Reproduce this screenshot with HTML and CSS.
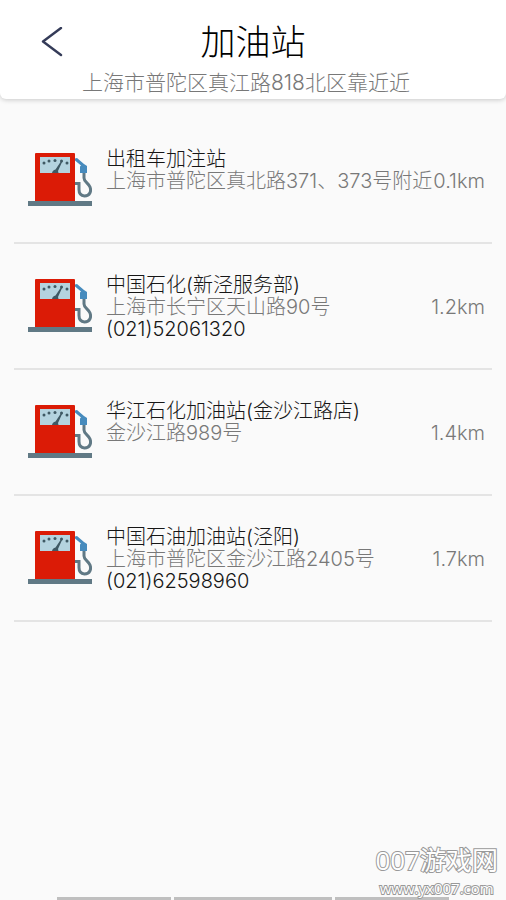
FILE: index.html
```html
<!DOCTYPE html>
<html lang="zh-CN">
<head>
<meta charset="utf-8">
<meta name="viewport" content="width=device-width, initial-scale=1">
<title>加油站</title>
<link rel="stylesheet" href="styles.css">
</head>
<body>
<svg class="defs" aria-hidden="true">
  <symbol id="pump" viewBox="0 0 64 56">
    <path d="M7 2q0-1 1-1h38q1 0 1 1v48H7z" fill="#db1b06"/>
    <path d="M12 5h30v16H12z" fill="#b4d3df"/>
    <g fill="#3f5964">
      <circle cx="16" cy="11" r="1.500"/><circle cx="21" cy="9" r="1.500"/><circle cx="27" cy="8.500" r="1.500"/><circle cx="33.500" cy="9" r="1.500"/><circle cx="39" cy="11" r="1.500"/>
      <path d="M24 21q.5-3 3.500-3.500l6-9 1 .5-4.500 10 .5 2z"/>
    </g>
    <path d="M0 49h64v5H0z" fill="#607985"/>
    <path d="M47 31.500h4v6q0 6 5.500 6.500c5.500 0 7-5 5.500-9-1.500-4-6-5-6-9v-5" fill="none" stroke="#607985" stroke-width="3"/>
    <path d="M47 6.500l2-.5 7 6 3 2v7h-7v-6.500l1-1-6-5z" fill="#478bbd"/>
  </symbol>
</svg>
<header class="header">
  <div class="bar">
    <button class="back" type="button" aria-label="返回">
      <svg class="back-icon" viewBox="0 0 22 30" aria-hidden="true"><path d="M20 1 2 14.500 20 28" fill="none" stroke="#343b58" stroke-width="2.400" stroke-linecap="round" stroke-linejoin="round"/></svg>
    </button>
    <h1 class="title">加油站</h1>
  </div>
  <p class="location">上海市普陀区真江路818北区靠近近</p>
</header>
<main>
  <ul class="stations">
    <li class="station">
      <svg class="pump" aria-hidden="true"><use href="#pump"/></svg>
      <div class="info">
        <h2 class="name">出租车加注站</h2>
        <p class="place"><span>上海市普陀区真北路371、373号附近</span><span>0.1km</span></p>
      </div>
    </li>
    <li class="station">
      <svg class="pump" aria-hidden="true"><use href="#pump"/></svg>
      <div class="info">
        <h2 class="name">中国石化(新泾服务部)</h2>
        <p class="place"><span>上海市长宁区天山路90号</span><span>1.2km</span></p>
        <a class="phone" href="tel:02152061320">(021)52061320</a>
      </div>
    </li>
    <li class="station">
      <svg class="pump" aria-hidden="true"><use href="#pump"/></svg>
      <div class="info">
        <h2 class="name">华江石化加油站(金沙江路店)</h2>
        <p class="place"><span>金沙江路989号</span><span>1.4km</span></p>
      </div>
    </li>
    <li class="station">
      <svg class="pump" aria-hidden="true"><use href="#pump"/></svg>
      <div class="info">
        <h2 class="name">中国石油加油站(泾阳)</h2>
        <p class="place"><span>上海市普陀区金沙江路2405号</span><span>1.7km</span></p>
        <a class="phone" href="tel:02162598960">(021)62598960</a>
      </div>
    </li>
  </ul>
</main>
<div class="watermark">
  <span class="mark-name">007游戏网</span>
  <span class="mark-url">www.yx007.com</span>
</div>
<footer class="tabs"><i class="tab"></i><i class="tab tab-wide"></i><i class="tab"></i></footer>
</body>
</html>
```

FILE: styles.css
```css
* { box-sizing: border-box; }

body {
  margin: 0;
  min-height: 100vh;
  display: flex;
  flex-direction: column;
  background: #fafafa;
  color: #161616;
  font: 300 20px/22px Inter, "Noto Sans CJK SC", sans-serif;
}

h1, h2, p, ul { margin: 0; padding: 0; font-weight: inherit; }

.defs { position: absolute; width: 0; height: 0; }

.header {
  padding: 16px 0 3px;
  background: #fff;
  border-radius: 0 0 6px 6px;
  box-shadow: 0 1px 5px rgba(0, 0, 0, 0.2);
}

.bar {
  display: grid;
  grid-template-columns: 80px 1fr 80px;
  align-items: center;
}

.back {
  display: flex;
  justify-content: flex-end;
  padding: 0 17px 0 0;
  border: 0;
  background: none;
}

.back-icon { width: 22px; height: 30px; }

.title {
  font-size: 35px;
  line-height: 52px;
  text-align: center;
  color: #000;
}

.location {
  padding: 2px 14px 0 0;
  font-size: 21px;
  line-height: 26px;
  text-align: center;
  color: #787878;
}

main { flex: 1; }

.stations {
  padding: 19px 14px 0;
  list-style: none;
}

.station {
  display: flex;
  gap: 14px;
  min-height: 126px;
  padding: 30px 7px 0 14px;
  border-bottom: 2px solid #e4e4e4;
}

.pump {
  flex: none;
  width: 64px;
  height: 56px;
  margin-top: 4px;
}

.info { flex: 1; min-width: 0; }

.name { font-size: 20px; }

.place {
  display: flex;
  justify-content: space-between;
  white-space: nowrap;
  color: #787878;
}

.phone {
  display: block;
  color: inherit;
  text-decoration: none;
}

.watermark {
  position: absolute;
  right: 8px;
  bottom: 2px;
  display: flex;
  flex-direction: column;
  align-items: center;
  color: #fff;
  -webkit-text-stroke: 2px #999;
  paint-order: stroke fill;
}

.mark-name {
  font-family: "Open Sans", "Noto Sans CJK SC", sans-serif;
  font-size: 26px;
  font-weight: 400;
  line-height: 36px;
}

.mark-url {
  font-family: "Open Sans", sans-serif;
  font-size: 15px;
  font-weight: 400;
  line-height: 20px;
}

.tabs {
  display: flex;
  gap: 3px;
  padding: 0 57px;
}

.tab { flex: 114; height: 3px; background: #bfbfbf; }

.tab-wide { flex: 158; }
```
